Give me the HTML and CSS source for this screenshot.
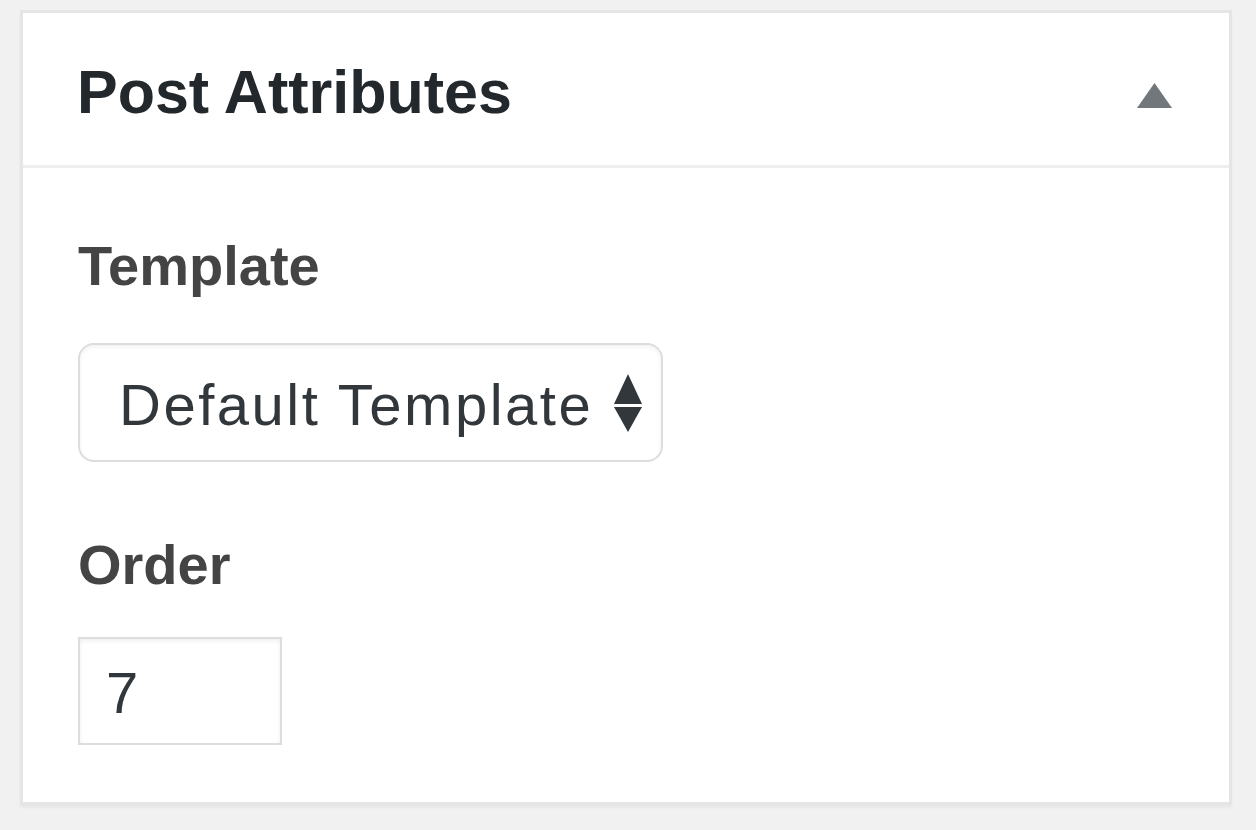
FILE: index.html
```html
<!DOCTYPE html>
<html>
<head>
<meta charset="utf-8">
<link rel="stylesheet" href="styles.css">
</head>
<body>
<div class="postbox">
  <div class="postbox-header">
    <h2 class="postbox-title">Post Attributes</h2>
    <svg class="toggle" width="35" height="25" viewBox="0 0 35 25"><polygon points="17.5,0 35,25 0,25" fill="#72777c"/></svg>
  </div>
  <div class="inside">
    <p class="label">Template</p>
    <div class="select">
      <span class="select-value">Default Template</span>
      <svg class="select-arrows" width="28" height="58" viewBox="0 0 28 58"><polygon points="14,0 28,30 0,30" fill="#32373c"/><polygon points="0,33 28,33 14,58" fill="#32373c"/></svg>
    </div>
    <p class="label label-order">Order</p>
    <div class="input">7</div>
  </div>
</div>
</body>
</html>
```

FILE: styles.css
```css
html, body {
  margin: 0;
  padding: 0;
}
body {
  background: #f1f1f1;
  padding: 10px 0 0 20px;
  font-family: "Liberation Sans", Arial, sans-serif;
  height: 830px;
  box-sizing: border-box;
}
.postbox {
  width: 1212px;
  height: 795px;
  box-sizing: border-box;
  background: #fff;
  border: 3px solid #e5e5e5;
  box-shadow: 0 3px 3px rgba(0, 0, 0, 0.04);
  display: flex;
  flex-direction: column;
}
.postbox-header {
  border-bottom: 3px solid #eeeeee;
  display: flex;
  align-items: center;
  justify-content: space-between;
  padding: 6px 57px 0 54px;
  box-sizing: border-box;
  height: 155px;
}
.postbox-title {
  margin: 0;
  font-size: 61px;
  line-height: 1;
  font-weight: bold;
  color: #23282d;
}
.toggle {
  display: block;
  margin-top: 7px;
}
.inside {
  padding: 70px 0 0 55px;
  display: flex;
  flex-direction: column;
  align-items: flex-start;
}
.label {
  margin: 0;
  font-size: 56px;
  line-height: 1;
  font-weight: bold;
  color: #444444;
}
.select {
  margin-top: 49px;
  width: 585px;
  height: 119px;
  box-sizing: border-box;
  border: 2px solid #dddddd;
  border-radius: 16px;
  box-shadow: inset 0 2px 4px rgba(0, 0, 0, 0.06);
  display: flex;
  align-items: center;
  justify-content: space-between;
  padding: 4px 19px 0 39px;
}
.select-value {
  font-size: 58px;
  line-height: 1;
  color: #32373c;
  letter-spacing: 2.5px;
}
.select-arrows {
  display: block;
  margin-top: -4px;
}
.label-order {
  margin-top: 75px;
}
.input {
  margin-top: 44px;
  width: 204px;
  height: 108px;
  box-sizing: border-box;
  border: 2px solid #dddddd;
  box-shadow: inset 0 2px 4px rgba(0, 0, 0, 0.07);
  display: flex;
  align-items: center;
  padding: 4px 0 0 26px;
  font-size: 58px;
  line-height: 1;
  color: #32373c;
}
```
